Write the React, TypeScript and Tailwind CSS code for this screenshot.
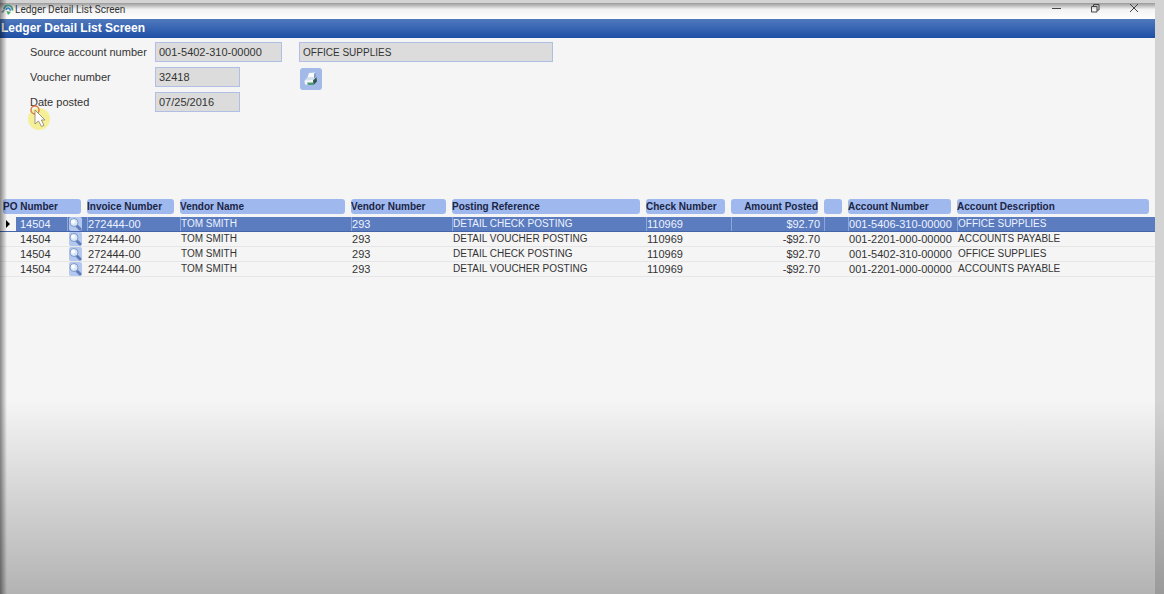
import { ReactNode } from "react";

interface Entry {
  po: string;
  invoice: string;
  vendor: string;
  vendorNo: string;
  reference: string;
  check: string;
  amount: string;
  account: string;
  description: string;
}

const base = {
  po: "14504",
  invoice: "272444-00",
  vendor: "TOM SMITH",
  vendorNo: "293",
  check: "110969",
};

const entries: Entry[] = [
  { ...base, reference: "DETAIL CHECK POSTING", amount: "$92.70", account: "001-5406-310-00000", description: "OFFICE SUPPLIES" },
  { ...base, reference: "DETAIL VOUCHER POSTING", amount: "-$92.70", account: "001-2201-000-00000", description: "ACCOUNTS PAYABLE" },
  { ...base, reference: "DETAIL CHECK POSTING", amount: "$92.70", account: "001-5402-310-00000", description: "OFFICE SUPPLIES" },
  { ...base, reference: "DETAIL VOUCHER POSTING", amount: "-$92.70", account: "001-2201-000-00000", description: "ACCOUNTS PAYABLE" },
];

function AppLogo() {
  return (
    <svg viewBox="0 0 14 12" className="h-3 w-3.5">
      <path d="M4 5C5 2 7 1 9 1.500c2 .5 3.500 2.500 3.500 5" fill="none" stroke="#3f8f7c" strokeWidth="1.800" />
      <path d="M6 6c.5-1.500 1.500-2 2.500-1.800 1.200.3 1.800 1.300 1.800 2.500" fill="none" stroke="#3b82c4" strokeWidth="1.800" />
      <path d="M6.500 7l4.500 1-3 3z" fill="#3fa85c" />
      <path d="M1 8l3-3 1 1-2 3z" fill="#8a9696" />
    </svg>
  );
}

function PrinterIcon() {
  return (
    <svg viewBox="0 0 16 16" className="h-4 w-4">
      <path d="M6 2l6-.5-1 6-7 .5z" fill="#f8fbff" />
      <path d="M2 9l3-3h8l1 1.500-3 3H2z" fill="#d5e0ee" />
      <path d="M1.500 9.500L10 9v4.500H2z" fill="#f3f7fb" />
      <path d="M10 9.500l3.500-3.500.5 4.500-3.500 3.500z" fill="#2f5750" />
      <path d="M4 11.500h6.500v2.500H5z" fill="#4f9a72" />
      <path d="M11.500 2l1 .5v4l-1.500.5z" fill="#7385a8" />
    </svg>
  );
}

function MagnifierIcon() {
  return (
    <svg viewBox="0 0 14 14" className="h-3.5 w-3.5">
      <rect x="1" width="13" height="14" rx="2" fill="#b4c7ee" />
      <path d="M8.500 8.500l3.500 3.500" stroke="#5f7db8" strokeWidth="3" strokeLinecap="round" />
      <circle cx="6" cy="5.500" r="4" fill="#d9eafa" stroke="#7f98c4" />
      <circle cx="5" cy="4.500" r="2" fill="#fff" />
    </svg>
  );
}

function Pointer() {
  return (
    <svg viewBox="0 0 28 30" className="pointer-events-none absolute left-[26px] top-[102px] h-[30px] w-7">
      <circle cx="13" cy="17" r="11" fill="#f5ee86" opacity=".85" />
      <circle cx="9" cy="8" r="4" fill="none" stroke="#dd7a4a" strokeWidth="1.500" />
      <path d="M9 8v14l3.500-3 3 5.500 2.500-1.200-2.700-5.300H19z" fill="#fff" stroke="#8a7f6a" strokeWidth=".8" />
    </svg>
  );
}

function Field({ id, label, value, width }: { id: string; label: string; value: string; width: string }) {
  return (
    <>
      <label htmlFor={id} className="w-[125px] shrink-0">
        {label}
      </label>
      <input id={id} readOnly defaultValue={value} className={`h-5 border border-[#b0bfe3] bg-[#dcdcdc] px-[3px] outline-none ${width}`} />
    </>
  );
}

function Head({ children, right }: { children?: ReactNode; right?: boolean }) {
  return (
    <th className="p-0 pr-[6px] pb-[3px] font-bold">
      <div className={`h-[15px] rounded-[3px] bg-[#9fb9ee] leading-[15px] ${right ? "text-right" : "text-left"}`}>{children}</div>
    </th>
  );
}

export default function App() {
  return (
    <div className="relative flex min-h-screen flex-col bg-[#d3d3d3] pt-[3px] pr-[9px] font-['Liberation_Sans',Arial,sans-serif] text-[11px] text-[#333]">
      <div className="flex grow flex-col bg-[#f5f5f5]">
        <header className="flex h-4 items-start justify-between bg-linear-to-b from-[#999] via-[#f2f2f2] via-40% to-white">
          <div className="flex items-center font-[Roboto,sans-serif] text-[10px] leading-[14px]">
            <AppLogo />
            <span className="pl-px">Ledger Detail List Screen</span>
          </div>
          <div className="flex items-center gap-[29px] pr-4">
            <button aria-label="Minimize">
              <svg viewBox="0 0 10 10" className="h-2.5 w-2.5" stroke="#444">
                <path d="M1 5.500h9" />
              </svg>
            </button>
            <button aria-label="Restore">
              <svg viewBox="0 0 10 10" className="h-2.5 w-2.5" fill="none" stroke="#444">
                <path d="M1.500 3.500h5.500v5.500H1.500zM3.500 3.500V1.500h5.500v5.500H7" />
              </svg>
            </button>
            <button aria-label="Close">
              <svg viewBox="0 0 10 10" className="h-2.5 w-2.5" stroke="#444">
                <path d="M1 1l8 8M9 1L1 9" />
              </svg>
            </button>
          </div>
        </header>
        <h1 className="h-[19px] bg-linear-to-b from-[#5079bd] to-[#1d4fa6] pl-px text-[12px] leading-[19px] font-bold text-white">
          Ledger Detail List Screen
        </h1>

        <form className="flex flex-col gap-[5px] pt-1 pl-[30px]">
          <div className="flex items-center">
            <Field id="account" label="Source account number" value="001-5402-310-00000" width="w-[127px]" />
            <input
              aria-label="Account description"
              readOnly
              defaultValue="OFFICE SUPPLIES"
              className="ml-[17px] h-5 w-[254px] border border-[#b0bfe3] bg-[#dcdcdc] px-[3px] text-[10px] outline-none"
            />
          </div>
          <div className="flex h-5 items-center">
            <Field id="voucher" label="Voucher number" value="32418" width="w-[85px]" />
            <button type="button" aria-label="Print" className="mt-1 ml-[60px] grid h-[22px] w-[22px] shrink-0 place-items-center rounded-[3px] bg-[#a3b9e8]">
              <PrinterIcon />
            </button>
          </div>
          <div className="flex items-center">
            <Field id="posted" label="Date posted" value="07/25/2016" width="w-[85px]" />
          </div>
        </form>

        <table className="mt-[87px] w-full table-fixed border-separate border-spacing-0">
          <colgroup>
            <col className="w-4" />
            <col className="w-[51px]" />
            <col className="w-5" />
            <col className="w-[93px]" />
            <col className="w-[171px]" />
            <col className="w-[101px]" />
            <col className="w-[194px]" />
            <col className="w-[85px]" />
            <col className="w-[93px]" />
            <col className="w-6" />
            <col className="w-[109px]" />
            <col />
          </colgroup>
          <thead className="text-[10px] text-[#1c2545]">
            <tr>
              <th colSpan={3} className="p-0 pr-[6px] pb-[3px] pl-[3px] font-bold">
                <div className="h-[15px] rounded-[3px] bg-[#9fb9ee] text-left leading-[15px]">PO Number</div>
              </th>
              <Head>Invoice Number</Head>
              <Head>Vendor Name</Head>
              <Head>Vendor Number</Head>
              <Head>Posting Reference</Head>
              <Head>Check Number</Head>
              <Head right>Amount Posted</Head>
              <Head />
              <Head>Account Number</Head>
              <Head>Account Description</Head>
            </tr>
          </thead>
          <tbody className="leading-[14px]">
            {entries.map((e, i) => (
              <tr
                key={i}
                className={
                  i === 0
                    ? "bg-[#5b7cbf] text-[#eef3ff] *:border-b *:border-b-[#4565aa] [&>td+td+td]:shadow-[inset_1px_0_#8fa7d8]"
                    : "*:border-b *:border-[#e6e6e6]"
                }
              >
                <td className="bg-[#f5f5f5] p-0 pl-1.5">
                  {i === 0 && (
                    <svg viewBox="0 0 4 8" className="h-2 w-1">
                      <path d="M0 0l4 4-4 4z" fill="#000" />
                    </svg>
                  )}
                </td>
                <td className="p-0 pl-1">{e.po}</td>
                <td className="p-0 pl-px">
                  <button aria-label={`Look up ${e.po}`} className="block">
                    <MagnifierIcon />
                  </button>
                </td>
                <td className="p-0 pl-px">{e.invoice}</td>
                <td className="p-0 pl-px text-[10px]">{e.vendor}</td>
                <td className="p-0 pl-px">{e.vendorNo}</td>
                <td className="p-0 pl-px text-[10px]">{e.reference}</td>
                <td className="p-0 pl-px">{e.check}</td>
                <td className="p-0 pr-1 text-right">{e.amount}</td>
                <td className="p-0" />
                <td className="p-0 pl-px">{e.account}</td>
                <td className="p-0 pl-px text-[10px]">{e.description}</td>
              </tr>
            ))}
          </tbody>
        </table>
      </div>

      <Pointer />
      <div className="pointer-events-none absolute inset-y-0 left-0 w-[7px] bg-linear-to-r from-black/45 to-transparent" />
      <div className="pointer-events-none absolute inset-x-0 top-[400px] bottom-0 bg-linear-to-b from-transparent to-black/27" />
    </div>
  );
}
